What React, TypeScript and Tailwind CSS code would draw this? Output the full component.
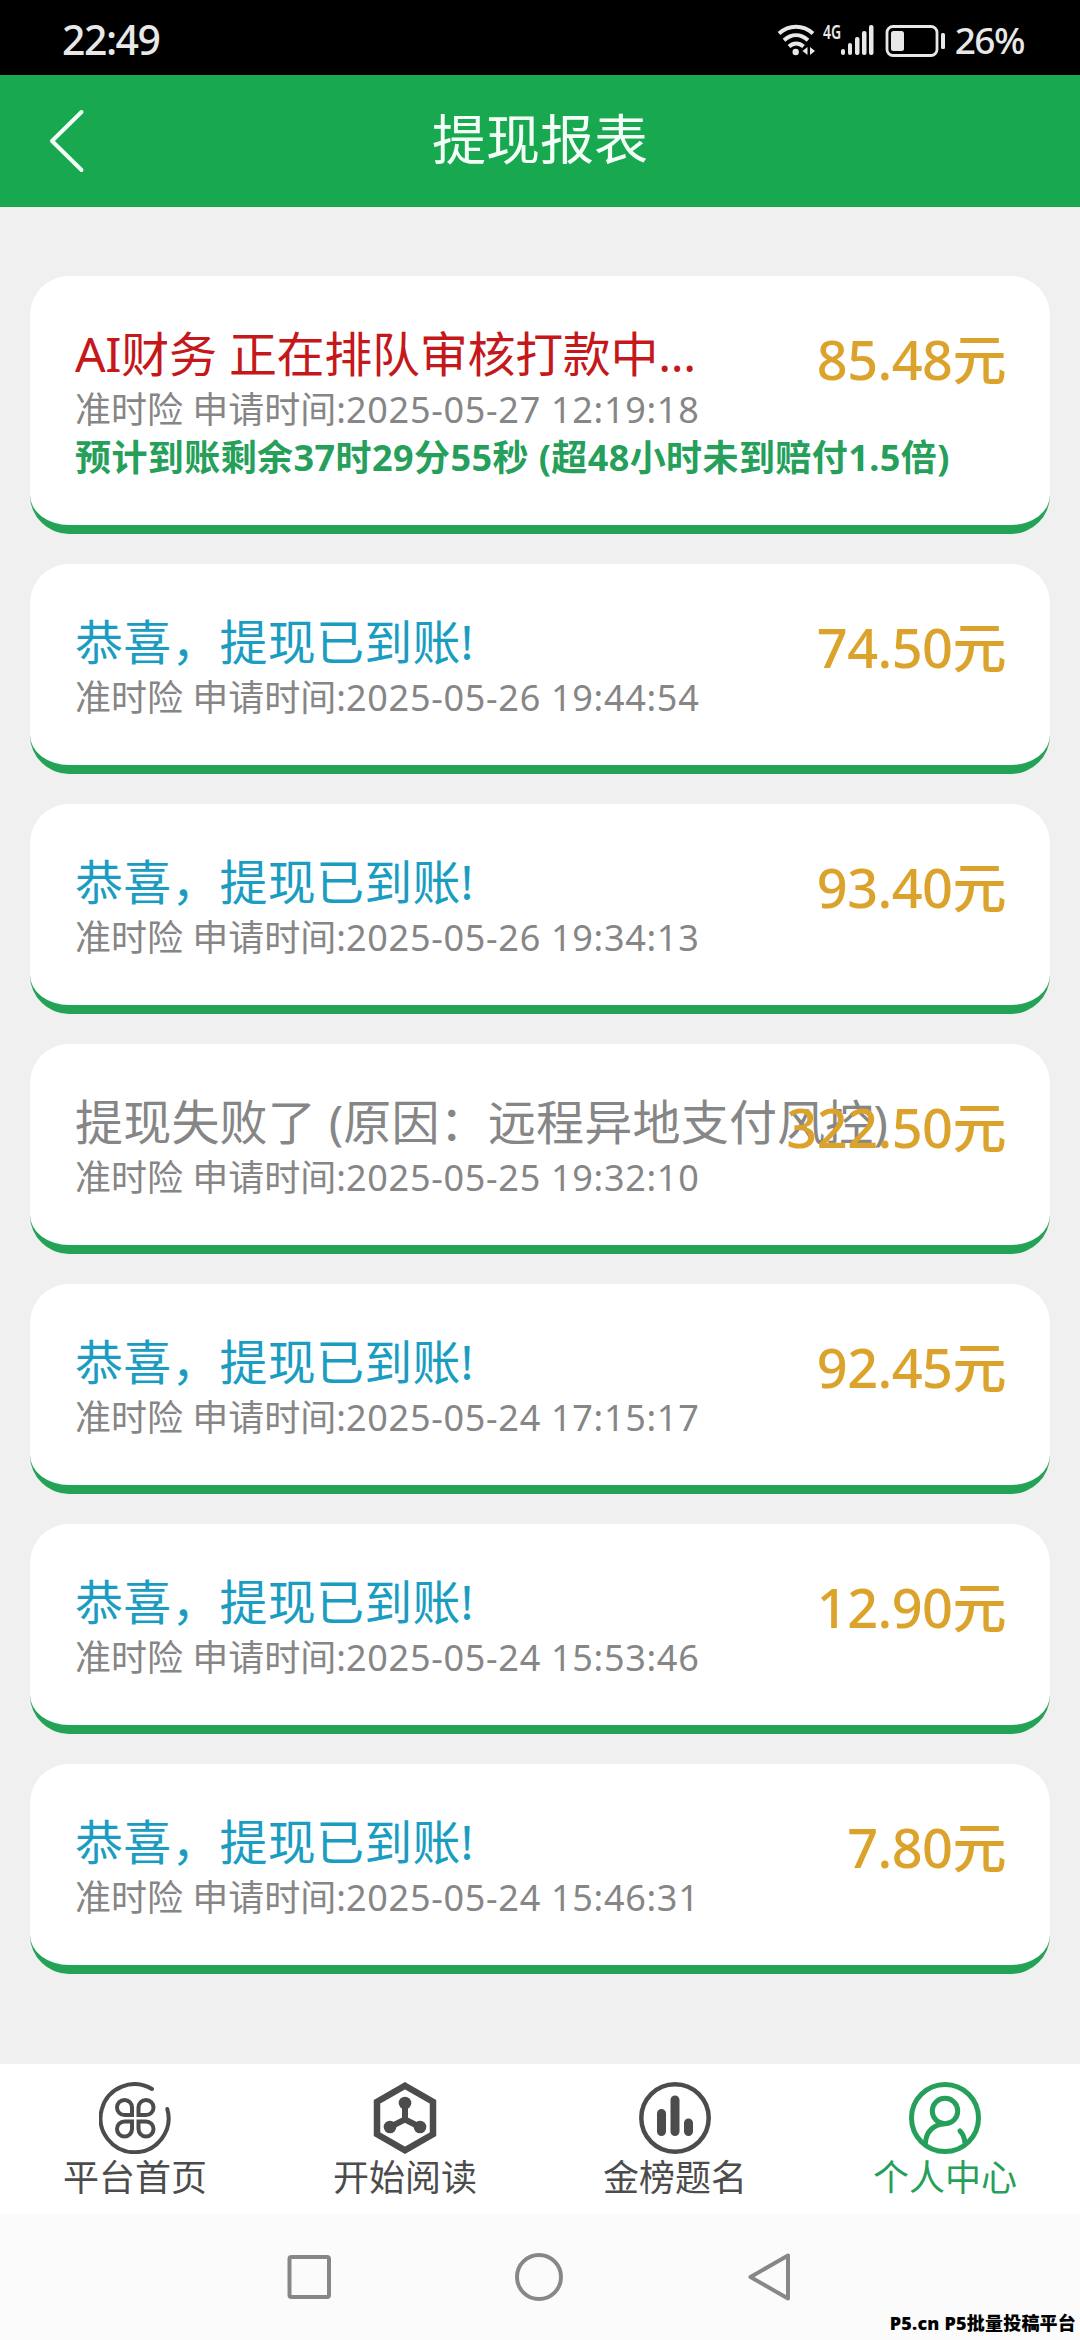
import React from 'react';

type Status = 'pending' | 'success' | 'failed';

interface Withdrawal {
  title: string;
  time: string;
  amount: string;
  status: Status;
  note?: string;
}

const records: Withdrawal[] = [
  {
    title: 'AI财务 正在排队审核打款中...',
    time: '2025-05-27 12:19:18',
    amount: '85.48',
    status: 'pending',
    note: '预计到账剩余37时29分55秒 (超48小时未到赔付1.5倍)',
  },
  { title: '恭喜，提现已到账!', time: '2025-05-26 19:44:54', amount: '74.50', status: 'success' },
  { title: '恭喜，提现已到账!', time: '2025-05-26 19:34:13', amount: '93.40', status: 'success' },
  { title: '提现失败了 (原因：远程异地支付风控)', time: '2025-05-25 19:32:10', amount: '322.50', status: 'failed' },
  { title: '恭喜，提现已到账!', time: '2025-05-24 17:15:17', amount: '92.45', status: 'success' },
  { title: '恭喜，提现已到账!', time: '2025-05-24 15:53:46', amount: '12.90', status: 'success' },
  { title: '恭喜，提现已到账!', time: '2025-05-24 15:46:31', amount: '7.80', status: 'success' },
];

const titleStyle: Record<Status, string> = {
  pending: 'text-[#c5181b] tracking-[-0.3px]',
  success: 'text-[#1b9dc2] tracking-[0.2px]',
  failed: 'text-[#868686] tracking-[0.2px]',
};

const StatusBar = () => (
  <div className="h-[75px] bg-black text-[#e8e8e8] flex items-center justify-between pl-[62px] pr-[56px]">
    <span className="text-[41px] font-medium leading-none tracking-[-1.5px] mt-1">22:49</span>
    <div className="flex items-center">
      {/* wifi */}
      <svg className="w-[40px] h-[34px] mt-1" viewBox="0 0 40 34" fill="none" stroke="currentColor" strokeWidth="4">
        <path d="M2 10.5C12 1.5 26 1.5 36 10.5" />
        <path d="M7 17.2C14.5 10.6 23.5 10.6 31 17.2" />
        <path d="M12 23.5C16.5 19.6 22 19.6 26.5 23.5" />
        <circle cx="18.7" cy="29" r="3.2" fill="currentColor" stroke="none" />
        <path d="M30.5 24v8l-5-4zM33 24v8l5-4z" fill="currentColor" stroke="none" />
      </svg>
      <span className="w-[18px] h-[34px] ml-[6px] text-[20px] font-semibold leading-[22px] origin-left scale-x-[0.7] whitespace-nowrap">4G</span>
      {/* signal */}
      <svg className="w-[34px] h-[34px] mt-1" viewBox="0 0 34 34" fill="currentColor">
        <rect x="0" y="26" width="4" height="6" rx="2" />
        <rect x="7" y="20" width="4" height="12" rx="2" />
        <rect x="14" y="14" width="4.5" height="18" rx="2" />
        <rect x="21" y="8" width="4.5" height="24" rx="2" />
        <rect x="28" y="2" width="4.5" height="30" rx="2" />
      </svg>
      {/* battery */}
      <svg className="w-[61px] h-[34px] ml-[10px] mt-1" viewBox="0 0 61 34" fill="none">
        <rect x="2" y="3.5" width="50" height="29" rx="6" stroke="currentColor" strokeWidth="2.8" />
        <rect x="6" y="8" width="13" height="20" rx="2.500" fill="currentColor" />
        <rect x="56" y="10" width="4" height="16" rx="1.500" fill="currentColor" />
      </svg>
      <span className="text-[37px] font-medium leading-none tracking-[-1.5px] ml-[9px] mt-1">26%</span>
    </div>
  </div>
);

const Header = () => (
  <header className="h-[132px] bg-[#18a850] text-[#f4fff8] grid grid-cols-3 items-center">
    <svg className="w-[40px] h-[66px] ml-[47px]" viewBox="0 0 40 66" fill="none" stroke="currentColor" strokeWidth="4" strokeLinecap="round" strokeLinejoin="round">
      <path d="M34.500 4L5 33l29.500 29" />
    </svg>
    <h1 className="text-[54px] leading-[80px] text-center -mt-1">提现报表</h1>
  </header>
);

const RecordCard: React.FC<{ record: Withdrawal }> = ({ record }) => (
  <div className={`relative bg-white rounded-[39px] border-b-[9px] border-[#22a355] pl-[45px] pt-[45px] ${record.note ? 'h-[258px]' : 'h-[210px]'}`}>
    <p className={`text-[48px] leading-[66px] whitespace-nowrap ${titleStyle[record.status]}`}>{record.title}</p>
    <p className="text-[36px] leading-[46px] text-[#868686] whitespace-nowrap">
      准时险 申请时间:<span className="tracking-[0.7px]">{record.time}</span>
    </p>
    {record.note && (
      <p className="text-[36px] leading-[50px] font-bold tracking-[0.42px] text-[#259f59] whitespace-nowrap">{record.note}</p>
    )}
    <span className="absolute right-[44px] top-[43px] text-[54px] font-medium leading-[80px] tracking-[-0.5px] text-[#dca32c]">{record.amount}元</span>
  </div>
);

const HomeIcon = () => (
  <svg className="w-[72px] h-[72px]" viewBox="0 0 72 72" fill="none" stroke="currentColor" strokeWidth="4">
    <path d="M53 7A34 34 0 1 0 68.3 27" strokeLinecap="round" />
    <path d="M33 33V25.500A7.500 7.500 0 1 0 25.500 33Z" />
    <path d="M39.500 33V25.500A7.500 7.500 0 1 1 47 33Z" />
    <path d="M33 39.500V47A7.500 7.500 0 1 1 25.500 39.500Z" />
    <path d="M39.500 39.500V47A7.500 7.500 0 1 0 47 39.500Z" />
  </svg>
);

const ReadIcon = () => (
  <svg className="w-[72px] h-[72px]" viewBox="0 0 72 72" fill="none" stroke="currentColor">
    <path d="M36 3.800L64 19.800V52.200L36 68.200L8 52.200V19.800Z" strokeWidth="6.500" />
    <path d="M36 21V37.500L21 45M36 37.500L51 45" strokeWidth="6" />
    <circle cx="36" cy="21" r="6.300" fill="currentColor" stroke="none" />
    <circle cx="21" cy="45" r="6.300" fill="currentColor" stroke="none" />
    <circle cx="51" cy="45" r="6.300" fill="currentColor" stroke="none" />
  </svg>
);

const RankIcon = () => (
  <svg className="w-[72px] h-[72px]" viewBox="0 0 72 72" fill="none" stroke="currentColor" strokeLinecap="round">
    <circle cx="36" cy="36" r="33.700" strokeWidth="4.500" />
    <path d="M22.500 31.500V49.500M36 18V49.500M49.500 41V49.500" strokeWidth="9" />
  </svg>
);

const UserIcon = () => (
  <svg className="w-[72px] h-[72px]" viewBox="0 0 72 72" fill="none" stroke="currentColor" strokeWidth="5" strokeLinecap="round">
    <circle cx="36" cy="36" r="33.500" />
    <circle cx="36" cy="29" r="12.700" />
    <path d="M34 42C25 43 17 49 16.500 61" />
    <path d="M51 49C54 52 55.500 55.500 56 61" />
  </svg>
);

const tabs = [
  { label: '平台首页', icon: HomeIcon },
  { label: '开始阅读', icon: ReadIcon },
  { label: '金榜题名', icon: RankIcon },
  { label: '个人中心', icon: UserIcon, active: true },
];

const TabBar = () => (
  <nav className="h-[150px] bg-white grid grid-cols-4 pt-[18px]">
    {tabs.map(({ label, icon: Icon, active }) => (
      <div key={label} className={`flex flex-col items-center ${active ? 'text-[#259f59]' : 'text-[#4c4c4c]'}`}>
        <Icon />
        <span className="text-[36px] leading-[48px]">{label}</span>
      </div>
    ))}
  </nav>
);

const SystemNav = () => (
  <div className="relative h-[126px] bg-[#fbfbfb] text-[#878787] flex justify-between items-center pl-[285px] pr-[287px]">
    <svg className="w-[48px] h-[52px]" viewBox="0 0 48 52" fill="none" stroke="currentColor" strokeWidth="4">
      <rect x="4.500" y="6" width="39.500" height="40" rx="2" />
    </svg>
    <svg className="w-[52px] h-[52px]" viewBox="0 0 52 52" fill="none" stroke="currentColor" strokeWidth="4">
      <circle cx="26" cy="26" r="22" />
    </svg>
    <svg className="w-[48px] h-[52px]" viewBox="0 0 48 52" fill="none" stroke="currentColor" strokeWidth="4" strokeLinejoin="round">
      <path d="M43 4.500V47.500L5.500 26Z" />
    </svg>
    <span className="absolute right-[4px] bottom-[4px] text-[18px] leading-[26px] tracking-[0.2px] font-black text-black whitespace-nowrap">P5.cn P5批量投稿平台</span>
  </div>
);

export default function App() {
  return (
    <div className="w-[1080px] h-[2340px] overflow-hidden flex flex-col bg-[#f0f0f0] font-['Noto_Sans','Noto_Sans_CJK_SC',sans-serif]">
      <StatusBar />
      <Header />
      <main className="flex-1 flex flex-col gap-[30px] px-[30px] pt-[69px]">
        {records.map((record) => (
          <RecordCard key={record.time} record={record} />
        ))}
      </main>
      <TabBar />
      <SystemNav />
    </div>
  );
}
